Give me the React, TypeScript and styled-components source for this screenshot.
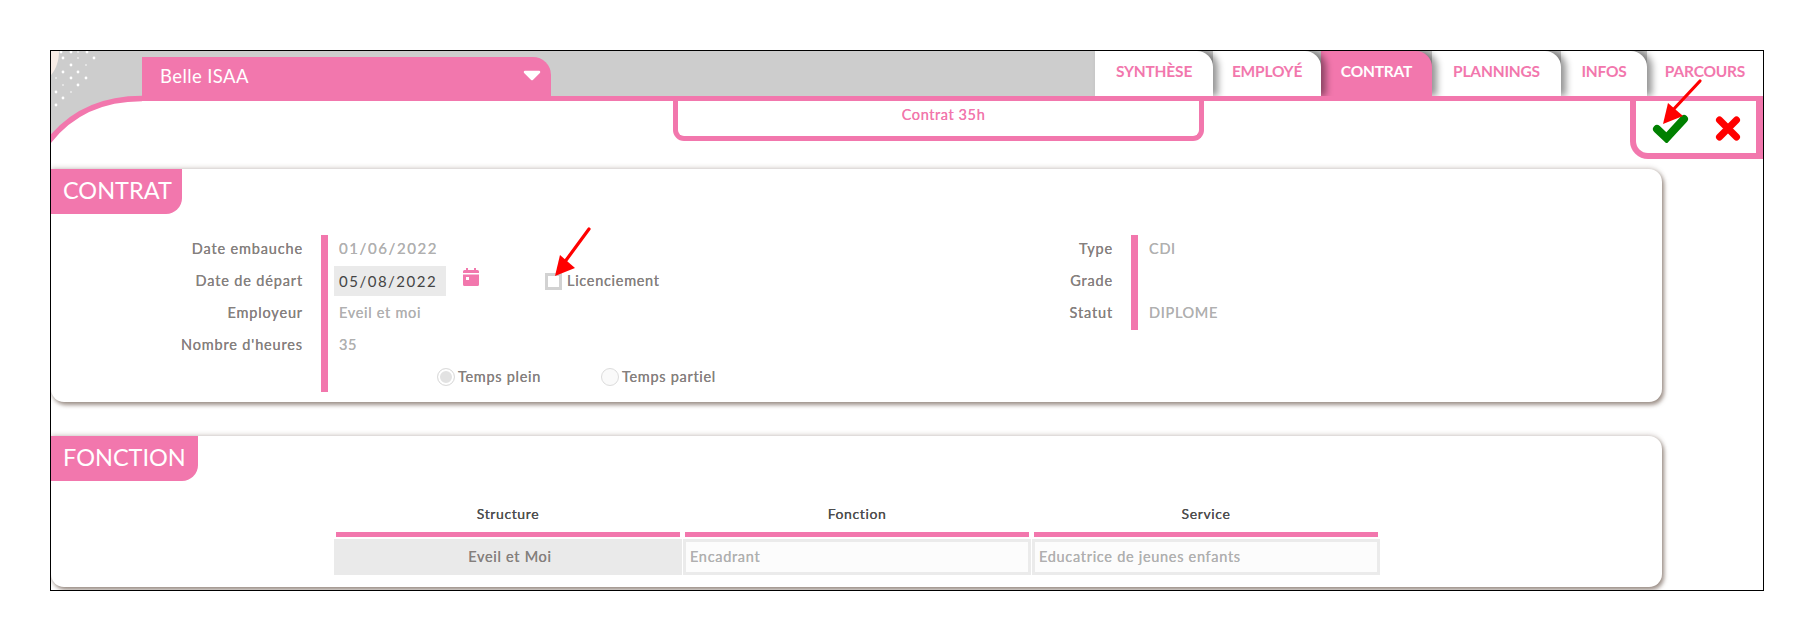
import React from "react";
import styled, { createGlobalStyle } from "styled-components";

const PINK = "#f277ad";

const Global = createGlobalStyle`
  html, body { margin: 0; padding: 0; background: #fff; }
  body { font-family: Lato, "Open Sans", sans-serif; }
  * { box-sizing: border-box; }
`;

const Frame = styled.div`
  position: relative;
  margin: 50px 0 0 50px;
  width: 1714px;
  height: 541px;
  border: 1px solid #000;
  overflow: hidden;
  background: #fff;
`;

const Header = styled.header`
  display: flex;
  justify-content: space-between;
  height: 45px;
  background: #cdcdcd;
  overflow: hidden;
`;

const PersonTab = styled.div`
  display: flex;
  align-items: center;
  justify-content: space-between;
  width: 409px;
  height: 39px;
  margin: 6px 0 0 91px;
  padding: 0 10px 2px 18px;
  background: ${PINK};
  border-top-right-radius: 18px;
  color: #fff;
  font-size: 18.5px;
  font-weight: 400;
  letter-spacing: 0.4px;
`;

const Tabs = styled.nav`
  display: flex;
`;

const Tab = styled.div<{ $w: number; $active?: boolean; $z: number }>`
  position: relative;
  z-index: ${(p) => p.$z};
  width: ${(p) => p.$w}px;
  height: 45px;
  display: flex;
  align-items: center;
  justify-content: center;
  padding-bottom: 5px;
  background: ${(p) => (p.$active ? PINK : "#fff")};
  color: ${(p) => (p.$active ? "#fff" : PINK)};
  border-top-right-radius: 16px;
  box-shadow: 5px 0 7px rgba(0, 0, 0, 0.42);
  font-size: 15.5px;
  font-weight: 700;
  letter-spacing: -0.2px;
`;

const LastTab = styled(Tab)`
  border-top-right-radius: 0;
  box-shadow: none;
`;

const Corner = styled.svg`
  position: absolute;
  left: 0;
  top: 0;
  z-index: 5;
`;

const Body = styled.main`
  position: relative;
  border-top: 5px solid ${PINK};
`;

const ActionRow = styled.div`
  display: flex;
  justify-content: space-between;
  align-items: flex-start;
  height: 58px;
  padding-left: 622px;
`;

const Notch = styled.div`
  width: 531px;
  height: 40px;
  display: flex;
  align-items: center;
  justify-content: center;
  padding: 0 0 8px 10px;
  border: 5px solid ${PINK};
  border-top: 0;
  border-radius: 0 0 11px 11px;
  color: ${PINK};
  font-size: 14.5px;
  font-weight: 400;
  letter-spacing: 0.6px;
  text-shadow: 0 0 0.5px ${PINK};
`;

const ActionBox = styled.div`
  width: 133px;
  height: 58px;
  display: flex;
  align-items: center;
  gap: 26px;
  padding: 2px 0 0 16px;
  border: 6px solid ${PINK};
  border-top: 0;
  border-right-width: 7px;
  border-bottom-left-radius: 18px;
`;

const Card = styled.section<{ $h: number; $top: number }>`
  width: 1611px;
  height: ${(p) => p.$h}px;
  margin-top: ${(p) => p.$top}px;
  background: #fff;
  border-radius: 0 13px 13px 13px;
  box-shadow: 2px 3px 4px rgba(105, 85, 75, 0.62), 0 -1px 5px rgba(105, 85, 75, 0.3);
`;

const CardTitle = styled.h2<{ $w: number }>`
  width: ${(p) => p.$w}px;
  height: 45px;
  margin: 0;
  padding: 0 0 4px 12px;
  display: flex;
  align-items: center;
  background: ${PINK};
  border-bottom-right-radius: 16px;
  color: #fff;
  font-size: 23.5px;
  font-weight: 400;
`;

const Fields = styled.div`
  display: flex;
  margin-top: 21px;
`;

const Group = styled.div<{ $w: number; $labels: number }>`
  width: ${(p) => p.$w}px;
  display: grid;
  grid-template-columns: ${(p) => p.$labels}px 1fr;
  column-gap: 18px;
  align-items: start;
`;

const Labels = styled.div`
  display: flex;
  flex-direction: column;
`;

const Label = styled.div`
  height: 32px;
  line-height: 27px;
  text-align: right;
  color: #85807e;
  font-size: 14.5px;
  font-weight: 400;
  letter-spacing: 0.85px;
  text-shadow: 0 0 0.6px #85807e;
  white-space: nowrap;
`;

const ValueRow = styled.div`
  display: flex;
  align-items: flex-start;
  height: 32px;
  line-height: 27px;
  color: #b0b0b0;
  font-size: 14.5px;
  font-weight: 400;
  letter-spacing: 0.7px;
  text-shadow: 0 0 0.6px #b0b0b0;
  white-space: nowrap;
`;

const Values = styled.div<{ $h: number }>`
  height: ${(p) => p.$h}px;
  border-left: 7px solid ${PINK};
  padding-left: 11px;
`;

const DateValue = styled.span`
  letter-spacing: 1.6px;
  font-size: 15px;
`;

const DateInput = styled.div`
  width: 112px;
  height: 30px;
  margin: -1px 0 0 -5px;
  padding-left: 5px;
  background: #eaeaea;
  color: #444;
  line-height: 30px;
  font-size: 15px;
  letter-spacing: 1.5px;
  text-shadow: none;
`;

const CalendarIcon = styled.svg`
  margin: 1px 0 0 17px;
  flex: none;
`;

const Checkbox = styled.span`
  width: 17px;
  height: 17px;
  margin: 6px 5px 0 66px;
  border: 3px solid #d2d2d2;
  background: #fff;
  flex: none;
`;

const SmallLabel = styled.span`
  color: #85807e;
  text-shadow: 0 0 0.6px #85807e;
`;

const RadioRow = styled(ValueRow)`
  padding-left: 98px;
`;

const Radio = styled.span<{ $checked?: boolean; $gap: number }>`
  width: 18px;
  height: 18px;
  margin: 5px 3px 0 ${(p) => p.$gap}px;
  border-radius: 50%;
  border: 1px solid #dcdcdc;
  background: ${(p) => (p.$checked ? "#e2e2e2" : "#fafafa")};
  box-shadow: ${(p) => (p.$checked ? "inset 0 0 0 2px #fff" : "none")};
  flex: none;
`;

const Table = styled.div`
  display: grid;
  grid-template-columns: repeat(3, 344px);
  column-gap: 5px;
  margin: 24px 0 0 285px;
`;

const ColHead = styled.div`
  height: 32px;
  padding-bottom: 10px;
  display: flex;
  align-items: center;
  justify-content: center;
  border-bottom: 5px solid ${PINK};
  color: #4e4e4e;
  font-size: 14px;
  font-weight: 400;
  letter-spacing: 0.6px;
  text-shadow: 0 0 0.6px #4e4e4e;
`;

const Cell = styled.div<{ $filled?: boolean }>`
  height: 36px;
  margin: 2px -2px 0;
  padding: 0 0 2px 4px;
  display: flex;
  align-items: center;
  justify-content: ${(p) => (p.$filled ? "center" : "flex-start")};
  background: ${(p) => (p.$filled ? "#eaeaea" : "#fcfcfc")};
  border: 3px solid ${(p) => (p.$filled ? "#eaeaea" : "#ebebeb")};
  color: ${(p) => (p.$filled ? "#85807e" : "#b0b0b0")};
  font-size: 14.5px;
  font-weight: 400;
  letter-spacing: 0.7px;
  text-shadow: 0 0 0.6px ${(p) => (p.$filled ? "#85807e" : "#b0b0b0")};
`;

const Arrow = styled.svg<{ $x: number; $y: number }>`
  position: absolute;
  left: ${(p) => p.$x}px;
  top: ${(p) => p.$y}px;
  z-index: 10;
  overflow: visible;
`;

const dots: [number, number][] = [
  [10, 1], [20, 1], [27, 1], [36, 1], [12, 7], [27, 7], [43, 7], [20, 14], [35, 14],
  [12, 21], [27, 21], [5, 27], [20, 27], [35, 27], [12, 34], [27, 34], [5, 41], [20, 41],
  [12, 47], [5, 54],
];

const RedArrow = ({ x, y, w, h }: { x: number; y: number; w: number; h: number }) => (
  <Arrow $x={x} $y={y} width={w} height={h} viewBox={`0 0 ${w} ${h}`}>
    <line x1={w} y1={0} x2={9} y2={h - 13} stroke="#f00" strokeWidth={3.2} strokeLinecap="round" />
    <polygon points={`0,${h} 5,${h - 21} 20,${h - 8}`} fill="#f00" />
  </Arrow>
);

const tabs: { label: string; w: number; active?: boolean }[] = [
  { label: "SYNTHÈSE", w: 118 },
  { label: "EMPLOYÉ", w: 108 },
  { label: "CONTRAT", w: 111, active: true },
  { label: "PLANNINGS", w: 129 },
  { label: "INFOS", w: 86 },
];

export default function App() {
  return (
    <>
      <Global />
      <Frame>
        <Corner width={91} height={100} viewBox="0 0 91 100">
          <path d="M0 0H91V48C50 48 20 62 0 90Z" fill="#cdcdcd" />
          <path d="M0 90C20 62 50 48 91 48V100H0Z" fill="#fff" />
          <path d="M0 0H8C8 10 5 18 0 24Z" fill="#f7ece6" />
          {dots.map(([cx, cy], i) => (
            <circle key={i} cx={cx} cy={cy} r={i % 3 === 2 ? 0.8 : 1.4} fill="#fff" />
          ))}
          <path d="M-2 90C20 62 50 47.5 91 47.5" fill="none" stroke={PINK} strokeWidth={5.5} />
        </Corner>
        <Header>
          <PersonTab>
            <span>Belle ISAA</span>
            <svg width="18" height="11" viewBox="0 0 18 11">
              <path d="M2 2H16L9 9Z" fill="#fff" stroke="#fff" strokeWidth="2.5" strokeLinejoin="round" />
            </svg>
          </PersonTab>
          <Tabs>
            {tabs.map((t, i) => (
              <Tab key={t.label} $w={t.w} $active={t.active} $z={10 - i}>
                {t.label}
              </Tab>
            ))}
            <LastTab $w={116} $z={1}>PARCOURS</LastTab>
          </Tabs>
        </Header>
        <Body>
          <ActionRow>
            <Notch>Contrat 35h</Notch>
            <ActionBox>
              <svg width="37" height="29" viewBox="0 0 37 29">
                <path d="M5 15L14.500 24L32 5" fill="none" stroke="#008000" strokeWidth="8" strokeLinecap="round" strokeLinejoin="miter" />
              </svg>
              <svg width="26" height="25" viewBox="0 0 26 25">
                <path d="M4.500 4L21.500 21M21.500 4L4.500 21" fill="none" stroke="#f00" strokeWidth="7" strokeLinecap="round" />
              </svg>
            </ActionBox>
          </ActionRow>
          <Card $h={233} $top={10}>
            <CardTitle $w={131}>CONTRAT</CardTitle>
            <Fields>
              <Group $w={852} $labels={252}>
                <Labels>
                  <Label>Date embauche</Label>
                  <Label>Date de départ</Label>
                  <Label>Employeur</Label>
                  <Label>Nombre d'heures</Label>
                </Labels>
                <Values $h={157}>
                  <ValueRow><DateValue>01/06/2022</DateValue></ValueRow>
                  <ValueRow>
                    <DateInput>05/08/2022</DateInput>
                    <CalendarIcon width="16" height="18" viewBox="0 0 16 18">
                      <path d="M3 0h2v2h6V0h2v2h1.500A1.500 1.500 0 0 1 16 3.500V5H0V3.500A1.500 1.500 0 0 1 1.500 2H3Z M0 6.500h16V16.500A1.500 1.500 0 0 1 14.500 18H1.500A1.500 1.500 0 0 1 0 16.500Z M3 9v3h3V9Z" fill={PINK} fillRule="evenodd" />
                    </CalendarIcon>
                    <Checkbox />
                    <SmallLabel>Licenciement</SmallLabel>
                  </ValueRow>
                  <ValueRow>Eveil et moi</ValueRow>
                  <ValueRow>35</ValueRow>
                  <RadioRow>
                    <Radio $checked $gap={0} />
                    <SmallLabel>Temps plein</SmallLabel>
                    <Radio $gap={60} />
                    <SmallLabel>Temps partiel</SmallLabel>
                  </RadioRow>
                </Values>
              </Group>
              <Group $w={400} $labels={210}>
                <Labels>
                  <Label>Type</Label>
                  <Label>Grade</Label>
                  <Label>Statut</Label>
                </Labels>
                <Values $h={95}>
                  <ValueRow>CDI</ValueRow>
                  <ValueRow />
                  <ValueRow>DIPLOME</ValueRow>
                </Values>
              </Group>
            </Fields>
          </Card>
          <Card $h={151} $top={34}>
            <CardTitle $w={147}>FONCTION</CardTitle>
            <Table>
              <ColHead>Structure</ColHead>
              <ColHead>Fonction</ColHead>
              <ColHead>Service</ColHead>
              <Cell $filled>Eveil et Moi</Cell>
              <Cell>Encadrant</Cell>
              <Cell>Educatrice de jeunes enfants</Cell>
            </Table>
          </Card>
        </Body>
        <RedArrow x={1612} y={30} w={37} h={43} />
        <RedArrow x={504} y={178} w={34} h={47} />
      </Frame>
    </>
  );
}
